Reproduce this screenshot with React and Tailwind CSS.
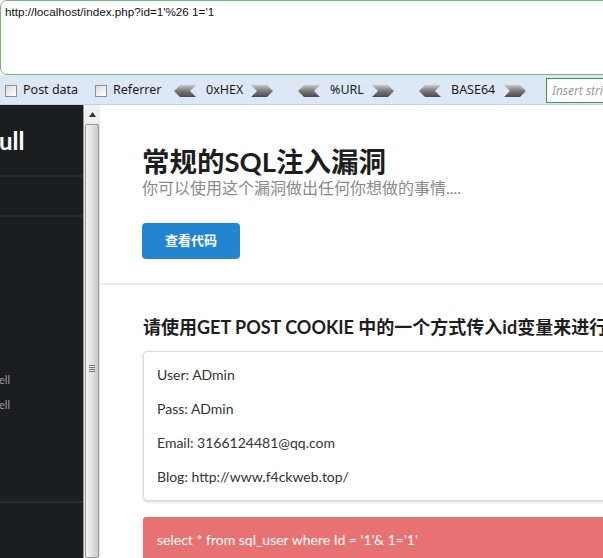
import React from "react";

const LeftArrow = () => (
  <svg width="22" height="12" viewBox="0 0 22 12" className="shrink-0">
    <defs>
      <linearGradient id="la" x1="0" y1="0" x2="0" y2="1">
        <stop offset="0" stopColor="#c8c8c8" />
        <stop offset="0.5" stopColor="#7a7a7a" />
        <stop offset="1" stopColor="#4a4a4a" />
      </linearGradient>
    </defs>
    <polygon points="0,6 6,0 22,0 16,6 22,12 6,12" fill="url(#la)" />
  </svg>
);

const RightArrow = () => (
  <svg width="22" height="12" viewBox="0 0 22 12" className="shrink-0">
    <defs>
      <linearGradient id="ra" x1="0" y1="0" x2="0" y2="1">
        <stop offset="0" stopColor="#c8c8c8" />
        <stop offset="0.5" stopColor="#7a7a7a" />
        <stop offset="1" stopColor="#4a4a4a" />
      </linearGradient>
    </defs>
    <polygon points="0,0 16,0 22,6 16,12 0,12 6,6" fill="url(#ra)" />
  </svg>
);

const Check = () => (
  <span className="inline-block shrink-0 w-[12px] h-[12px] border border-[#8f8f8f] bg-gradient-to-br from-[#dcdcdc] to-[#ffffff]" />
);

export default function App() {
  const cjk = { fontFamily: "Lato, 'Noto Sans CJK SC', sans-serif" };
  return (
    <div className="w-[603px] h-[558px] overflow-hidden bg-white relative" style={{ fontFamily: "'Noto Sans', 'Noto Sans CJK SC', sans-serif" }}>
      {/* URL textarea */}
      <div className="w-[640px] h-[75px] border border-[#73b873] rounded-l-[7px] bg-white pl-[4px] pt-[3px]">
        <div className="text-[11.7px] text-[#111] leading-[16px]" style={{ fontFamily: "'Liberation Sans', sans-serif" }}>
          http://localhost/index.php?id=1'%26 1='1
        </div>
      </div>
      {/* toolbar */}
      <div className="h-[30px] bg-[#dce8f5] border-b border-[#c3d3e4] flex items-center text-[12.5px] text-[#1a1a1a] whitespace-nowrap pt-[2px] overflow-hidden">
        <div className="flex items-center ml-[5px] w-[90px] shrink-0">
          <Check />
          <span className="ml-[6px]">Post data</span>
        </div>
        <div className="flex items-center w-[79px] shrink-0">
          <Check />
          <span className="ml-[6px]">Referrer</span>
        </div>
        <div className="flex items-center shrink-0">
          <LeftArrow />
          <span className="ml-[10px] w-[45px]">0xHEX</span>
          <RightArrow />
        </div>
        <div className="flex items-center ml-[25px] shrink-0">
          <LeftArrow />
          <span className="ml-[10px] w-[42px]">%URL</span>
          <RightArrow />
        </div>
        <div className="flex items-center ml-[25px] shrink-0">
          <LeftArrow />
          <span className="ml-[10px] w-[53px]">BASE64</span>
          <RightArrow />
        </div>
        <div className="ml-[20px] w-[120px] h-[25px] border border-[#3f963f] bg-white flex items-center pl-[5px] text-[12px] italic text-[#999] shrink-0">
          Insert string
        </div>
      </div>
      {/* body */}
      <div className="flex h-[453px]">
        {/* sidebar */}
        <div className="w-[83px] shrink-0 bg-[#1c1d20] flex flex-col overflow-hidden">
          <div className="h-[72px] border-b-2 border-[#2b2c30] flex items-center">
            <span className="text-white font-bold text-[24px] -ml-[1px] pt-[2px]" style={{ fontFamily: "Lato, sans-serif" }}>ull</span>
          </div>
          <div className="h-[40px] border-b-2 border-[#2b2c30]" />
          <div className="h-[286px] border-b-2 border-[#2b2c30] flex flex-col pt-[156px] gap-[11px] text-[11px] text-[#9b9ca0]" style={{ fontFamily: "Lato, sans-serif" }}>
            <span className="-ml-[1px] leading-[14px]">ell</span>
            <span className="-ml-[1px] leading-[14px]">ell</span>
          </div>
        </div>
        {/* scrollbar */}
        <div className="w-[17px] shrink-0 bg-[#e6e6e6] border-l border-[#9a9a9a] flex flex-col">
          <div className="h-[18px] bg-[#f0f0f0] flex items-center justify-center">
            <svg width="7" height="5" viewBox="0 0 7 5"><polygon points="3.5,0 7,5 0,5" fill="#333" /></svg>
          </div>
          <div className="flex-1 mt-[1px] mx-[1px] border border-[#9a9a9a] rounded-[2px] bg-gradient-to-r from-[#f2f2f2] via-[#e2e2e2] to-[#c9c9c9] flex flex-col">
            <div className="h-[240px]" />
            <div className="flex flex-col items-center gap-[1px]">
              <div className="w-[6px] h-[1px] bg-[#777]" />
              <div className="w-[6px] h-[1px] bg-[#777]" />
              <div className="w-[6px] h-[1px] bg-[#777]" />
              <div className="w-[6px] h-[1px] bg-[#777]" />
            </div>
          </div>
        </div>
        {/* main */}
        <div className="flex-1 min-w-0 overflow-hidden bg-white" style={cjk}>
          <div className="w-[800px]">
            <div className="pl-[42px] pt-[40px] pb-[24px] border-b-2 border-[#ebebeb]">
              <h1 className="text-[27.5px] font-bold leading-[33px] text-[#1e1e1e]">常规的SQL注入漏洞</h1>
              <p className="text-[16px] leading-[20px] text-[#8a8a8a]">你可以使用这个漏洞做出任何你想做的事情....</p>
              <div className="mt-[25px] w-[98px] h-[36px] rounded-[4px] bg-[#2185d0] flex items-center justify-center text-white text-[13px] font-bold">
                查看代码
              </div>
            </div>
            <div className="pl-[43px]">
              <h2 className="mt-[30px] text-[18px] font-bold leading-[24px] text-[#1e1e1e] whitespace-nowrap">请使用GET POST COOKIE 中的一个方式传入id变量来进行注入测试</h2>
              <div className="mt-[12px] w-[520px] border border-[#dedede] rounded-[4px] bg-white shadow-[0_1px_3px_rgba(0,0,0,0.18)] pl-[13px] pt-[5px] pb-[7px] text-[14px] text-[#333]">
                <div className="h-[34px] flex items-center">User: ADmin</div>
                <div className="h-[34px] flex items-center">Pass: ADmin</div>
                <div className="h-[34px] flex items-center">Email: 3166124481@qq.com</div>
                <div className="h-[34px] flex items-center">Blog: http://www.f4ckweb.top/</div>
              </div>
              <div className="mt-[16px] w-[520px] h-[60px] bg-[#e87272] rounded-t-[3px] pl-[14px] pt-[14px] text-[14px] text-white leading-[18px]">
                select * from sql_user where Id = '1'&amp; 1='1'
              </div>
            </div>
          </div>
        </div>
      </div>
    </div>
  );
}
